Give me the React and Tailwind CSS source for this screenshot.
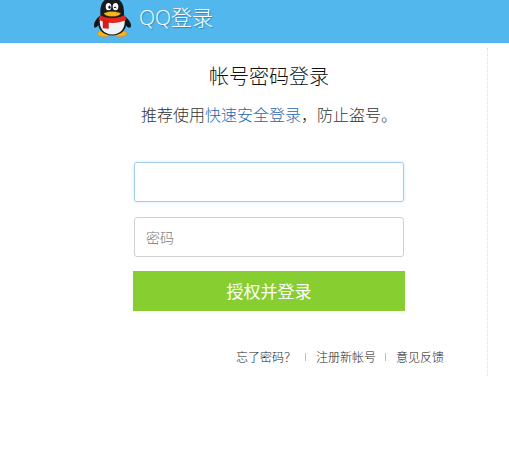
import React from "react";

const footerLinks = ["忘了密码？", "注册新帐号", "意见反馈"];

const Penguin = () => (
  <svg viewBox="0 0 38 38" className="w-[38px] h-[38px] shrink-0" aria-hidden="true">
    {/* wings */}
    <path d="M9 14C5 17 1 21 1 25.500c0 3 1.500 3 4 0l5-5z" fill="#10151b" />
    <path d="M29 14c4 3 9 7 9 11.500 0 3-2.500 3-5 0l-5-5z" fill="#10151b" />
    {/* feet */}
    <ellipse cx="11.500" cy="33.500" rx="7" ry="3.200" fill="#fbb21a" stroke="#c98410" strokeWidth="0.4" />
    <ellipse cx="27" cy="33.500" rx="7" ry="3.200" fill="#fbb21a" stroke="#c98410" strokeWidth="0.4" />
    {/* body and belly */}
    <path d="M5 19C3.500 29 10 35.500 19.200 35.500S35 29 33.500 19L28 14H10z" fill="#171b20" />
    <path d="M7 19c-1.500 9 4 15.500 12.200 15.500S33 28 31.500 19c-5 4-19.500 4-24.500 0z" fill="#f1f2f4" />
    {/* head */}
    <path d="M7.500 15C6.500 4 10-2 19-2S31.500 4 31 15c0 4-5 5-11.500 5s-12-1-12-5z" fill="#171b20" />
    <ellipse cx="15.500" cy="6.700" rx="2.800" ry="3.600" fill="#fff" />
    <ellipse cx="22.500" cy="6.700" rx="2.800" ry="3.600" fill="#fff" />
    <ellipse cx="16.500" cy="7.200" rx="1.100" ry="1.600" fill="#111" />
    <path d="M20.800 8.200q1.200-2.800 2.500 0" fill="none" stroke="#111" strokeWidth="1" />
    <path d="M11 13.500c3-2.500 13.500-2.500 16.500 0-2 3.800-14.500 3.800-16.500 0z" fill="#fbb917" stroke="#c98410" strokeWidth="0.4" />
    {/* scarf */}
    <path d="M7 15c6 4 18.500 4 24.500 0l2 4.500c-7 4.500-21 4.500-28 0z" fill="#e3241f" />
    <path d="M10 20.500l5.500 1v7l-5.500-.5z" fill="#d91d1b" stroke="#b01515" strokeWidth="0.4" />
  </svg>
);

function App() {
  return (
    <div className="min-h-screen bg-white font-['Noto_Sans_CJK_SC',sans-serif]">
      <header className="flex h-[43px] items-start gap-2 bg-[#51b7ec] pl-[93px]">
        <Penguin />
        <h1 className="pt-[3px] font-['Open_Sans','Noto_Sans_CJK_SC',sans-serif] text-[21px] leading-7 font-light text-white [text-shadow:1px_1px_1px_#3288b8]">
          QQ登录
        </h1>
      </header>

      <main className="pt-[5px] pr-[21px] pl-[51px]">
        <section className="border-r border-dotted border-[#d8dee2] pt-3.5 pb-[9px]">
          <h2 className="text-center text-[20px] leading-7 font-light text-[#111]">帐号密码登录</h2>
          <p className="mt-3 text-center text-[16px] leading-6 font-light text-[#333]">
            推荐使用
            <a href="#quick" className="text-[#1f66b4]">快速安全登录</a>
            ，防止盗号。
          </p>

          <form className="mx-auto mt-9 w-[272px]" onSubmit={(e) => e.preventDefault()}>
            <div className="flex flex-col gap-[15px] px-px">
              <input
                type="text"
                aria-label="帐号"
                className="h-10 w-full rounded-[3px] border border-[#a5cdea] px-3 text-[14px] shadow-[0_0_3px_#bfe4f8] outline-none"
              />
              <input
                type="password"
                aria-label="密码"
                placeholder="密码"
                className="h-10 w-full rounded-[3px] border border-[#d0d0d4] px-[11px] text-[14px] font-light outline-none placeholder:text-[#777]"
              />
            </div>
            <button type="submit" className="mt-3.5 h-10 w-full bg-[#87ce30] text-[17px] text-white">
              授权并登录
            </button>
          </form>

          <nav className="mt-9 flex justify-end pr-[43px] text-[12px] leading-5 font-light text-[#222]">
            {footerLinks.map((label, i) => (
              <React.Fragment key={label}>
                {i > 0 && <span className="my-1.5 ml-[9px] mr-[10px] w-px bg-[#bbb]" />}
                <a href="#help">{label}</a>
              </React.Fragment>
            ))}
          </nav>
        </section>
      </main>
    </div>
  );
}

export default App;
